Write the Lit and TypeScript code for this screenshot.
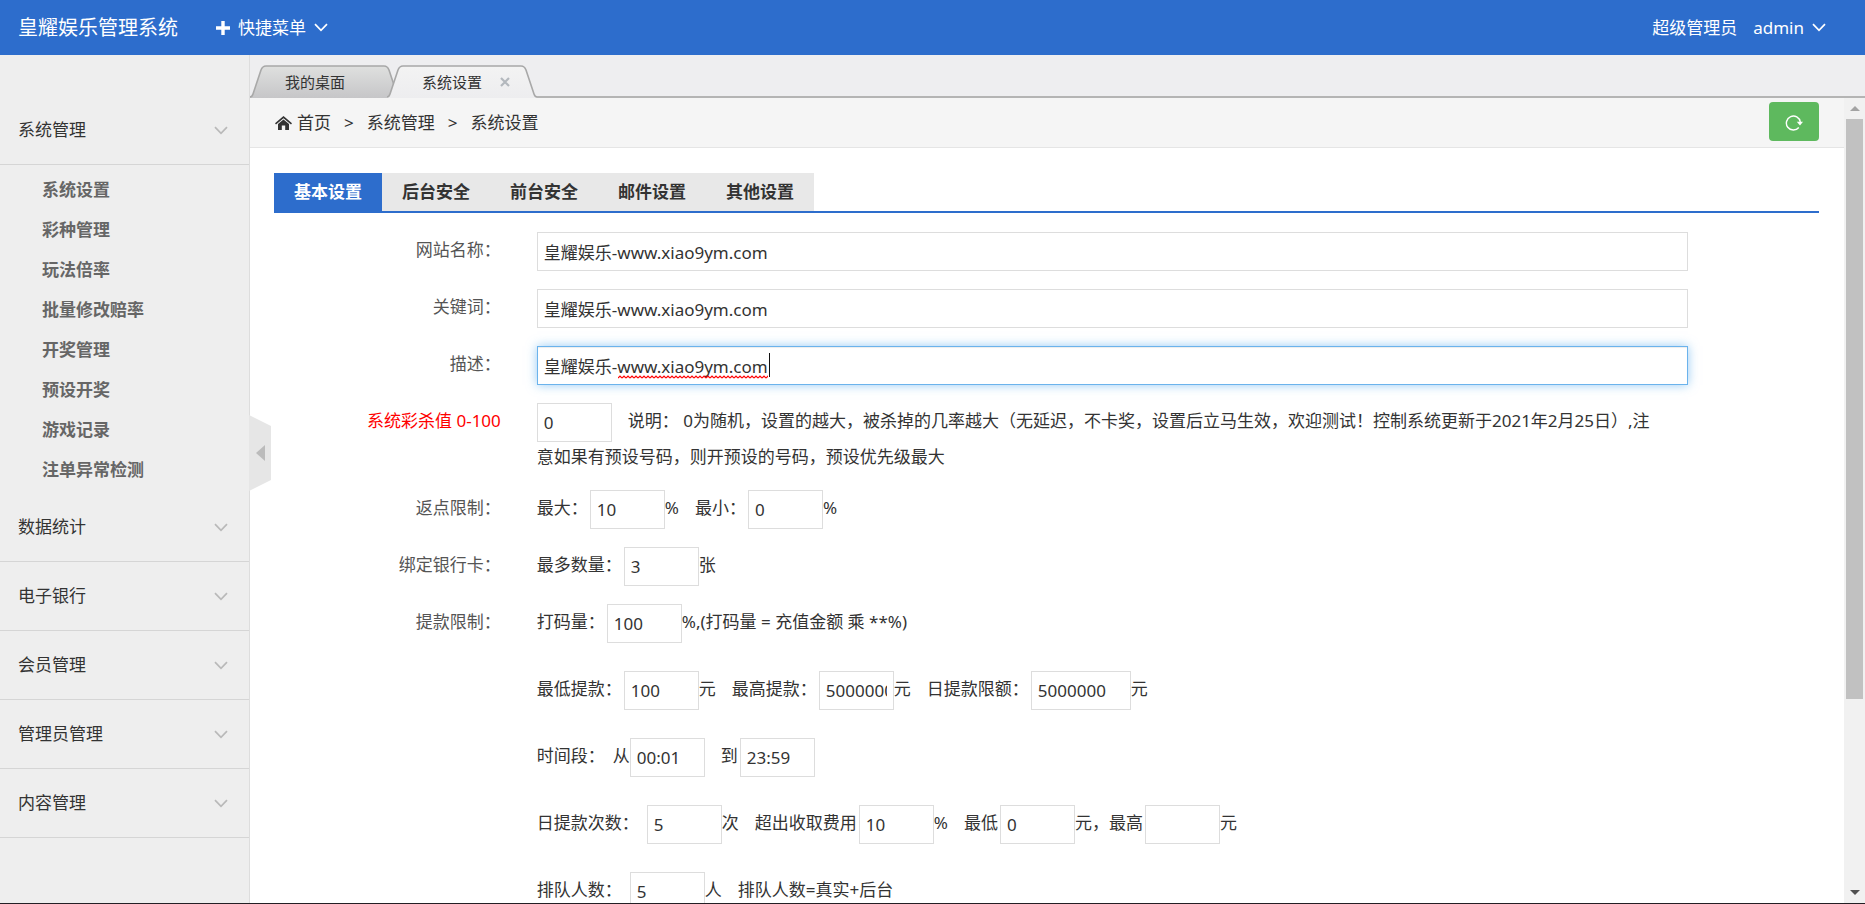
import { LitElement, html, css, svg, nothing } from "lit";
import { customElement, state } from "lit/decorators.js";
import { classMap } from "lit/directives/class-map.js";

interface Part {
  text?: string;
  value?: string;
  name?: string;
  wide?: boolean;
  lead?: boolean;
  near?: boolean;
}
interface Line {
  label: string;
  roomy?: boolean;
  parts: Part[];
}

const submenu = ["系统设置", "彩种管理", "玩法倍率", "批量修改赔率", "开奖管理", "预设开奖", "游戏记录", "注单异常检测"];
const groups = ["数据统计", "电子银行", "会员管理", "管理员管理", "内容管理"];
const panels = ["基本设置", "后台安全", "前台安全", "邮件设置", "其他设置"];
const site = "皇耀娱乐-www.xiao9ym.com";

const lines: Line[] = [
  {
    label: "返点限制：",
    parts: [
      { text: "最大：", name: "rebateMax" }, { value: "10", name: "rebateMax" }, { text: "%" },
      { text: "最小：", name: "rebateMin", lead: true }, { value: "0", name: "rebateMin" }, { text: "%" },
    ],
  },
  {
    label: "绑定银行卡：",
    parts: [{ text: "最多数量：", name: "cards" }, { value: "3", name: "cards" }, { text: "张" }],
  },
  {
    label: "提款限制：",
    parts: [{ text: "打码量：", name: "turnover" }, { value: "100", name: "turnover" }, { text: "%,(打码量 = 充值金额 乘 **%)" }],
  },
  {
    label: "",
    roomy: true,
    parts: [
      { text: "最低提款：", name: "drawMin" }, { value: "100", name: "drawMin" }, { text: "元" },
      { text: "最高提款：", name: "drawMax", lead: true }, { value: "50000000", name: "drawMax" }, { text: "元" },
      { text: "日提款限额：", name: "drawDay", lead: true }, { value: "5000000", name: "drawDay", wide: true }, { text: "元" },
    ],
  },
  {
    label: "",
    roomy: true,
    parts: [
      { text: "时间段：" }, { text: "从", name: "from", near: true }, { value: "00:01", name: "from" },
      { text: "到", name: "to", lead: true }, { value: "23:59", name: "to" },
    ],
  },
  {
    label: "",
    roomy: true,
    parts: [
      { text: "日提款次数：", name: "times" }, { value: "5", name: "times", near: true }, { text: "次" },
      { text: "超出收取费用", name: "fee", lead: true }, { value: "10", name: "fee" }, { text: "%" },
      { text: "最低", name: "feeMin", lead: true }, { value: "0", name: "feeMin" },
      { text: "元，最高", name: "feeMax" }, { value: "", name: "feeMax" }, { text: "元" },
    ],
  },
  {
    label: "",
    roomy: true,
    parts: [
      { text: "排队人数：", name: "queue" }, { value: "5", name: "queue", near: true }, { text: "人" },
      { text: "排队人数=真实+后台", lead: true },
    ],
  },
];

const chevron = html`<svg class="chevron" viewBox="0 0 14 9" width="14" height="9" aria-hidden="true">
  <path d="M1 1.2 7 7.4 13 1.2" fill="none" stroke="currentColor" stroke-width="1.7" />
</svg>`;

const tabShape = (top: string, bottom: string, id: string) => html`<svg class="shape" viewBox="0 0 150 33" preserveAspectRatio="none" aria-hidden="true">
  <defs>
    <linearGradient id=${id} x1="0" y1="0" x2="0" y2="1">
      <stop offset="0" stop-color=${top} />
      <stop offset="1" stop-color=${bottom} />
    </linearGradient>
  </defs>
  ${svg`<path d="M0 32.5Q2 32 3 29L11 5Q12.500 1 16 1H134Q137.500 1 139 5L147 29Q148 32 150 32.500V33H0Z" fill="url(#${id})"/>
  <path d="M0 32Q2 32 3 29L11 5Q12.500 1 16 1H134Q137.500 1 139 5L147 29Q148 32 150 32" fill="none" stroke="#a8a8a8" stroke-width="1.600"/>`}
</svg>`;

@customElement("app-root")
export class AppRoot extends LitElement {
  @state() private panel = 0;

  static styles = css`
    :host {
      display: flex;
      flex-direction: column;
      height: 100vh;
      box-sizing: border-box;
      border-bottom: 1px solid #231f24;
      overflow: hidden;
      font: 17px/36px "Noto Sans", "Noto Sans CJK SC", sans-serif;
      color: #333;
      background: #fff;
    }
    * { box-sizing: border-box; }
    a { color: inherit; text-decoration: none; }
    button { font: inherit; color: inherit; border: 0; background: none; padding: 0; cursor: pointer; }
    ul { list-style: none; margin: 0; padding: 0; }
    svg { display: block; flex: none; }

    .top {
      display: flex;
      align-items: center;
      flex: none;
      height: 55px;
      padding: 0 39px 0 18px;
      background: #2d6dcc;
      color: #fff;
    }
    .logo { font-size: 20px; margin-right: 38px; }
    .quick, .user { display: flex; align-items: center; gap: 8px; }
    .user { margin-left: auto; }

    .body { display: flex; flex: 1; min-height: 0; }
    .side {
      position: relative;
      flex: none;
      width: 250px;
      padding-top: 41px;
      background: #eee;
      border-right: 1px solid #ddd;
    }
    .group {
      display: flex;
      align-items: center;
      justify-content: space-between;
      width: 100%;
      height: 69px;
      padding: 0 21px 0 18px;
      border-bottom: 1px solid #d5d5d5;
    }
    .group .chevron { color: #b9b9b9; }
    .sub { padding: 5px 0 3px 42px; }
    .sub a { display: block; line-height: 40px; font-weight: 700; color: #666; }
    .fold { position: absolute; left: 249px; top: 360px; z-index: 3; }

    .main { display: flex; flex-direction: column; flex: 1; min-width: 0; }
    .strip {
      display: flex;
      align-items: flex-end;
      flex: none;
      height: 43px;
      background: linear-gradient(#b4b4b4, #b4b4b4) bottom / 100% 2px no-repeat #eeeef0;
    }
    .tab {
      position: relative;
      display: flex;
      align-items: center;
      width: 150px;
      height: 33px;
      padding-left: 35px;
      font-size: 15px;
    }
    .tab.open { margin-left: -13px; }
    .tab .shape { position: absolute; inset: 0; width: 100%; height: 100%; }
    .tab a, .tab button { position: relative; }
    .tab button { margin-left: 18px; }

    .frame { display: flex; flex: 1; min-height: 0; }
    .page { flex: 1; min-width: 0; overflow: hidden; }
    .crumbs {
      display: flex;
      align-items: center;
      gap: 13px;
      height: 50px;
      padding: 0 25px;
      background: #f5f5f5;
      border-bottom: 1px solid #e5e5e5;
    }
    .home { display: flex; align-items: center; gap: 5px; }
    .refresh {
      display: flex;
      align-items: center;
      justify-content: center;
      margin: 0 0 2px auto;
      width: 50px;
      height: 39px;
      border-radius: 4px;
      background: #5eb95e;
      color: #fff;
    }

    .content { padding: 25px 25px 0 24px; }
    .panels { display: flex; border-bottom: 2px solid #2d6dcc; }
    .panels button {
      height: 38px;
      padding: 0 20px;
      background: #e8e8e8;
      font-weight: 700;
    }
    .panels .on { background: #2d6dcc; color: #fff; }

    .row {
      display: grid;
      grid-template-columns: 2fr 9fr 1fr;
      margin: 18px -16px 0;
    }
    .panels + .row { margin-top: 19px; }
    .row.roomy { margin-top: 28px; }
    .caption { padding-right: 20px; text-align: right; color: #555; }
    .caption.hot { color: #f00; }
    .field { display: flex; padding: 0 16px; white-space: nowrap; }
    .field.note { display: block; margin-bottom: -3px; }
    .note .input { margin-bottom: -3px; }
    .input {
      font: inherit;
      color: #333;
      width: 100%;
      height: 39px;
      padding: 0 6px;
      border: 1px solid #ddd;
      border-radius: 0;
      background: #fff;
      outline: none;
      line-height: 24px;
    }
    .input.small { flex: none; width: 75px; vertical-align: top; }
    .input.wide { width: 100px; }
    label + .input.small { margin-left: 2px; }
    label + .input.small.near { margin-left: 8px; }
    .lead { margin-left: 16px; }
    .near { margin-left: 8px; }
    .near + .input.small { margin-left: 0; }
    .active { position: relative; width: 100%; }
    .active .input {
      display: block;
      border-color: #6bb3ec;
      box-shadow: inset 0 1px 1px rgba(0, 0, 0, 0.075), 0 0 10px rgba(82, 168, 236, 0.6);
    }
    .spell { position: absolute; left: 81px; top: 29px; }
    .caret { position: absolute; left: 232px; top: 7px; width: 1px; height: 24px; background: #111; }

    .scroll {
      display: flex;
      flex-direction: column;
      align-items: center;
      flex: none;
      width: 21px;
      background: #f1f1f1;
    }
    .arrow { height: 21px; display: flex; align-items: center; }
    .track { flex: 1; width: 17px; }
    .thumb { height: 76%; background: #c1c1c1; }
  `;

  private part(p: Part) {
    const cls = { lead: !!p.lead, near: !!p.near };
    if (p.value !== undefined)
      return html`<input class=${classMap({ input: true, small: true, wide: !!p.wide, ...cls })} id=${p.name!} .value=${p.value} />`;
    if (p.name) return html`<label class=${classMap(cls)} for=${p.name}>${p.text}</label>`;
    return html`<span class=${classMap(cls)}>${p.text}</span>`;
  }

  render() {
    return html`
      <header class="top">
        <a class="logo" href="#">皇耀娱乐管理系统</a>
        <button class="quick">
          <svg width="14" height="14" viewBox="0 0 14 14" aria-hidden="true"><path d="M5.300 0h3.400v5.300H14v3.400H8.700V14H5.300V8.700H0V5.300h5.300z" fill="currentColor" /></svg>
          <span>快捷菜单</span>${chevron}
        </button>
        <div class="user">
          <span>超级管理员</span>
          <span></span>
          <a href="#">admin</a>${chevron}
        </div>
      </header>
      <div class="body">
        <nav class="side">
          <button class="group"><span>系统管理</span>${chevron}</button>
          <ul class="sub">
            ${submenu.map((s) => html`<li><a href="#">${s}</a></li>`)}
          </ul>
          ${groups.map((g) => html`<button class="group"><span>${g}</span>${chevron}</button>`)}
          <button class="fold" aria-label="收起菜单">
            <svg width="22" height="76" viewBox="0 0 22 76"><path d="M0 0 22 11V65L0 76Z" fill="#e6e6e6" /><path d="M16 30V46L7 38Z" fill="#bbb" /></svg>
          </button>
        </nav>
        <div class="main">
          <div class="strip">
            <div class="tab">${tabShape("#dfe0df", "#c6c6c8", "g1")}<a href="#">我的桌面</a></div>
            <div class="tab open">
              ${tabShape("#f3f3f3", "#ededef", "g2")}<a href="#">系统设置</a>
              <button aria-label="关闭">
                <svg width="10" height="10" viewBox="0 0 10 10"><path d="M1 1 9 9M9 1 1 9" stroke="#b3b8bd" stroke-width="2.200" /></svg>
              </button>
            </div>
          </div>
          <div class="frame">
            <div class="page">
              <nav class="crumbs">
                <a class="home" href="#">
                  <svg width="17" height="14" viewBox="0 0 17 14" aria-hidden="true">
                    <path d="M8.500 0 17 7.300 16 8.600 8.500 2.300 1 8.600 0 7.300Z" fill="#333" />
                    <path d="M8.500 3.400 14 8V14H10.200V9.600H6.800V14H3V8Z" fill="#333" />
                  </svg>
                  首页</a>
                <span>&gt;</span><span>系统管理</span><span>&gt;</span><span>系统设置</span>
                <button class="refresh" aria-label="刷新">
                  <svg width="18" height="18" viewBox="0 0 18 18">
                    <path d="M13.800 14.500A7 7 0 1 1 15.300 9" fill="none" stroke="currentColor" stroke-width="1.400" />
                    <path d="M11.800 8.800H18L15 12.400Z" fill="currentColor" />
                  </svg>
                </button>
              </nav>
              <div class="content">
                <div class="panels" role="tablist">
                  ${panels.map((p, i) => html`<button role="tab" aria-selected=${i === this.panel} class=${classMap({ on: i === this.panel })} @click=${() => (this.panel = i)}>${p}</button>`)}
                </div>
                <div class="row">
                  <label class="caption" for="title">网站名称：</label>
                  <div class="field"><input class="input" id="title" .value=${site} /></div>
                </div>
                <div class="row">
                  <label class="caption" for="keywords">关键词：</label>
                  <div class="field"><input class="input" id="keywords" .value=${site} /></div>
                </div>
                <div class="row">
                  <label class="caption" for="about">描述：</label>
                  <div class="field">
                    <div class="active">
                      <input class="input" id="about" .value=${site} />
                      <svg class="spell" width="150" height="4" aria-hidden="true">
                        <defs><pattern id="wave" width="4" height="4" patternUnits="userSpaceOnUse"><path d="M0 3 2 1 4 3" fill="none" stroke="#f00" stroke-width="1.200" /></pattern></defs>
                        <rect width="150" height="4" fill="url(#wave)" />
                      </svg>
                      <span class="caret"></span>
                    </div>
                  </div>
                </div>
                <div class="row">
                  <label class="caption hot" for="kill">系统彩杀值 0-100</label>
                  <div class="field note">
                    <input class="input small" id="kill" .value=${"0"} /><span class="lead">说明： 0为随机，设置的越大，被杀掉的几率越大（无延迟，不卡奖，设置后立马生效，欢迎测试！控制系统更新于2021年2月25日）,注</span><br />意如果有预设号码，则开预设的号码，预设优先级最大
                  </div>
                </div>
                ${lines.map((l) => html`
                  <div class=${classMap({ row: true, roomy: !!l.roomy })}>
                    <span class="caption">${l.label || nothing}</span>
                    <div class="field">${l.parts.map((p) => this.part(p))}</div>
                  </div>`)}
              </div>
            </div>
            <div class="scroll" aria-hidden="true">
              <span class="arrow"><svg width="10" height="5"><path d="M5 0 10 5H0Z" fill="#a3a3a3" /></svg></span>
              <div class="track"><div class="thumb"></div></div>
              <span class="arrow"><svg width="10" height="5"><path d="M0 0H10L5 5Z" fill="#505050" /></svg></span>
            </div>
          </div>
        </div>
      </div>
    `;
  }
}
